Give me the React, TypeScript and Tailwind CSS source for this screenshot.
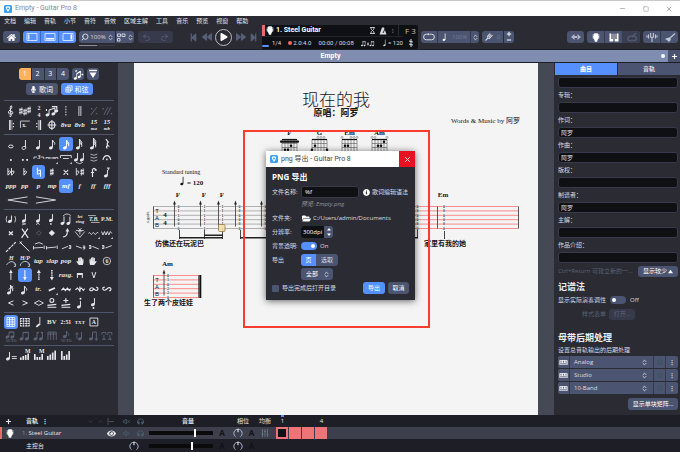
import { useState } from 'react';
import type { ReactNode } from 'react';
import {
  FaHome,
  FaPlay,
  FaBackward,
  FaForward,
  FaStepBackward,
  FaStepForward,
  FaMicrophone,
  FaFolderOpen,
  FaInfoCircle,
  FaEye,
  FaHeadphones,
  FaHandPaper,
  FaPowerOff,
} from 'react-icons/fa';
import {
  ChevronDown,
  ChevronUp,
  ChevronsUpDown,
  Hourglass,
  Minus,
  Plus,
  Redo2,
  Search,
  Square,
  Undo2,
  VolumeX,
  X,
} from 'lucide-react';

const MENUS = ['文档', '编辑', '音轨', '小节', '音符', '音效', '区域主解', '工具', '音乐', '预览', '视窗', '帮助'];

type Tool = {
  id: string;
  text?: string;
  active?: boolean;
  dim?: boolean;
  wide?: boolean;
};

/* One array per separated block of the palette, one inner array per row */
const PALETTE: Tool[][][] = [
  [
    [
      { id: 'clef' }, { id: 'sharps' }, { id: 'meter' }, { id: 'feel' },
      { id: 'freebar' }, { id: 'doublebar' }, { id: 'simile', dim: true }, { id: 'simile2', dim: true },
    ],
    [
      { id: 'repeatopen' }, { id: 'ending' }, { id: 'repeatclose' }, { id: 'coda' },
      { id: '8va', text: '8va' }, { id: '8vb', text: '8vb' }, { id: '15ma' }, { id: '15mb' },
    ],
  ],
  [
    [
      { id: 'whole' }, { id: 'half' }, { id: 'quarter' }, { id: 'eighth' },
      { id: 'sixteenth', active: true }, { id: 'thirtysecond' }, { id: 'sixtyfourth' }, { id: 'rest' },
    ],
    [
      { id: 'dot' }, { id: 'dots' }, { id: 'triplet' }, { id: 'tuplet' },
      { id: 'tupletbox' }, { id: 'tie' }, { id: 'ties' }, { id: 'fermata' },
    ],
    [
      { id: 'doubleflat' }, { id: 'flat' }, { id: 'natural', active: true }, { id: 'sharp' },
      { id: 'doublesharp' }, { id: 'flatsharp' }, { id: 'octaveup' }, { id: 'octavedown' },
    ],
    [
      { id: 'ppp', text: 'ppp' }, { id: 'pp', text: 'pp' }, { id: 'p', text: 'p' }, { id: 'mp', text: 'mp' },
      { id: 'mf', text: 'mf', active: true }, { id: 'f', text: 'f' }, { id: 'ff', text: 'ff' }, { id: 'fff', text: 'fff' },
    ],
    [{ id: 'crescendo', wide: true }, { id: 'decrescendo', wide: true }],
  ],
  [
    [
      { id: 'ghost' }, { id: 'accent' }, { id: 'heavyaccent' }, { id: 'staccato' },
      { id: 'legato' }, { id: 'letring' }, { id: 'trembar' }, { id: 'pm' },
    ],
    [
      { id: 'dead' }, { id: 'bigdead' }, { id: 'harmonic', dim: true }, { id: 'artificial' },
      { id: 'bend' }, { id: 'whammy' }, { id: 'vibrato' }, { id: 'widevibrato' },
    ],
    [
      { id: 'slideup' }, { id: 'slidedown' }, { id: 'slidelegato' }, { id: 'slideshift' },
      { id: 'slideinbelow' }, { id: 'slideinabove' }, { id: 'slideoutup' }, { id: 'slideoutdown' },
    ],
    [
      { id: 'hammer' }, { id: 'pulloff' }, { id: 'tap', text: 'tap' }, { id: 'slap', text: 'slap' },
      { id: 'pop', text: 'pop' }, { id: 'lefthand' }, { id: 'righthand' }, { id: 'stringnumber' },
    ],
    [
      { id: 'brushup' }, { id: 'brushdown', active: true }, { id: 'arpeggioup' }, { id: 'arpeggiodown' },
      { id: 'rasg', text: 'rasg.' }, { id: 'downbow' }, { id: 'upbow' },
    ],
    [
      { id: 'gracebefore' }, { id: 'graceon' }, { id: 'trill', text: 'tr.' }, { id: 'tremolo' },
      { id: 'mordent' }, { id: 'mordent2' }, { id: 'turn' }, { id: 'turn2' },
    ],
    [
      { id: 'fadein' }, { id: 'fadeout' }, { id: 'swell' }, { id: 'wahopen' },
      { id: 'wahclose' }, { id: 'golpe' }, { id: 'golpe2' },
    ],
  ],
  [
    [
      { id: 'chordgrid', active: true }, { id: 'scalegrid' }, { id: 'slash' },
      { id: 'bv' }, { id: 'timer' }, { id: 'txt' }, { id: 'section' },
    ],
    [
      { id: 'beamauto', dim: true }, { id: 'beam', dim: true }, { id: 'beamsplit', dim: true }, { id: 'beambars', dim: true },
      { id: 'stemauto', dim: true }, { id: 'stemup', dim: true }, { id: 'stemdown', dim: true }, { id: 'brackets', dim: true },
    ],
  ],
  [
    [{ id: 'tempo' }, { id: 'volumem' }, { id: 'panm' }, { id: 'volume' }, { id: 'pan' }],
  ],
];

const line = { fill: 'none', stroke: 'currentColor' };

function Head({ x = 5, y = 10, hollow }: { x?: number; y?: number; hollow?: boolean }) {
  return (
    <ellipse
      cx={x}
      cy={y}
      rx="2"
      ry="1.5"
      transform={`rotate(-20 ${x} ${y})`}
      fill={hollow ? 'none' : 'currentColor'}
      stroke={hollow ? 'currentColor' : 'none'}
      strokeWidth=".8"
    />
  );
}

function Note({ x = 6, y = 10, top = 3, flags = 0, hollow }: { x?: number; y?: number; top?: number; flags?: number; hollow?: boolean }) {
  return (
    <>
      <Head x={x} y={y} hollow={hollow} />
      <path d={`M${x + 1.6} ${y - 0.4}V${top}`} {...line} strokeWidth="1" />
      {Array.from({ length: flags }, (_, i) => (
        <path key={i} d={`M${x + 1.7} ${top + i * 1.6}q.3 1.5 1.7 2.2q1 1 .3 2.4`} {...line} strokeWidth="1" />
      ))}
    </>
  );
}

function Mark({ children, x = 7, y = 9, size = 6, italic }: { children: string; x?: number; y?: number; size?: number; italic?: boolean }) {
  return (
    <text
      x={x}
      y={y}
      fontSize={size}
      textAnchor="middle"
      fill="currentColor"
      className={italic ? 'font-bold italic' : 'font-bold'}
      fontFamily="Liberation Serif, serif"
    >
      {children}
    </text>
  );
}

function Bars({ heights }: { heights: number[] }) {
  return (
    <>
      {heights.map((h, i) => (
        <rect key={i} x={2 + i * 2.5} y={12 - h} width="1.7" height={h} fill="currentColor" />
      ))}
    </>
  );
}

const FLAT = 'M0 -4V3.2Q3.2 1 2.6 -.6Q1.6 -1.8 0 0';
const SHARP = 'M-.9 -3V3.6M.9 -3.6V3M-2 -1L2 -1.8M-2 1.8L2 1';

const ICONS: Record<string, ReactNode> = {
  clef: (
    <path d="M7.2 12.5q-1.6.4-1.7-.8M7.3 12.3L6.4 3.4Q6.6 1.4 7.8 1.8Q8.6 3.8 6.6 5.4Q4 7.4 4.6 9.2Q6 11 8.4 10Q9.6 8.2 8 7.2Q6.2 7 6.2 8.6" {...line} />
  ),
  sharps: (
    <g {...line} strokeWidth=".9">
      <path d={SHARP} transform="translate(3 7)" />
      <path d={SHARP} transform="translate(7.2 8)" />
      <path d={SHARP} transform="translate(11.3 6)" />
    </g>
  ),
  meter: (
    <>
      <Mark y={6} size={6}>2</Mark>
      <Mark y={13} size={6}>4</Mark>
    </>
  ),
  feel: (
    <>
      <Note x={2.5} y={11} top={6} />
      <Note x={8.5} y={10} top={4} />
      <path d="M4.2 6L10.2 4M7 2.5h5v3M1.5 7v-2" {...line} strokeWidth="1.2" />
      <Head x={11.5} y={7} />
    </>
  ),
  freebar: <path d="M7 2V12" {...line} strokeDasharray="1.5 1.2" />,
  doublebar: <path d="M6 2V12M8 2V12" {...line} strokeWidth=".9" />,
  simile: (
    <>
      <path d="M4 11L10 3" {...line} />
      <path d="M4 4h1.4v1.4H4zM9 9h1.4v1.4H9z" fill="currentColor" />
    </>
  ),
  simile2: (
    <>
      <path d="M4 11L8 3M7 11L11 3" {...line} />
      <path d="M2.5 4h1.4v1.4H2.5zM11 9h1.4v1.4H11z" fill="currentColor" />
    </>
  ),
  repeatopen: (
    <>
      <path d="M6 2V12" {...line} strokeWidth="1.6" />
      <path d="M8 2V12" {...line} strokeWidth=".6" />
      <path d="M9 5h1.2v1.2H9zM9 8h1.2v1.2H9z" fill="currentColor" />
    </>
  ),
  ending: (
    <>
      <path d="M2.5 10V3H12" {...line} strokeWidth=".8" />
      <Mark x={6.5} y={9} size={6}>x.</Mark>
    </>
  ),
  repeatclose: (
    <>
      <path d="M8.5 2V12" {...line} strokeWidth="1.6" />
      <path d="M6.5 2V12" {...line} strokeWidth=".6" />
      <path d="M4.2 5h1.2v1.2H4.2zM4.2 8h1.2v1.2H4.2z" fill="currentColor" />
    </>
  ),
  coda: <path d="M7 2V12M2.5 7H11.5M4 7a3 3.5 0 1 0 6 0a3 3.5 0 1 0-6 0" {...line} strokeWidth="1.1" />,
  '15ma': (
    <>
      <Mark y={6} size={7} italic>15</Mark>
      <Mark y={12.4} size={5} italic>ma</Mark>
    </>
  ),
  '15mb': (
    <>
      <Mark y={6} size={7} italic>15</Mark>
      <Mark y={12.4} size={5} italic>mb</Mark>
    </>
  ),
  whole: <ellipse cx="7" cy="9.5" rx="2.3" ry="1.5" {...line} />,
  half: <Note hollow y={11} />,
  quarter: <Note y={11} />,
  eighth: <Note flags={1} y={11} />,
  sixteenth: <Note flags={2} y={11} />,
  thirtysecond: <Note flags={3} x={5} y={11} top={2} />,
  sixtyfourth: <Note flags={4} x={5} y={11} top={1} />,
  rest: <path d="M6 2L8.4 5Q6.2 6.8 8.4 9Q5.4 8.6 7.4 11.6" {...line} strokeWidth="1.3" />,
  dot: <circle cx="7" cy="9" r="1" fill="currentColor" />,
  dots: <path d="M4 8h1.8v1.8H4zM8.4 8h1.8v1.8H8.4z" fill="currentColor" />,
  triplet: (
    <>
      <path d="M2 8V6H5M9 6H12V8" {...line} strokeWidth=".8" />
      <Mark y={8} size={6} italic>3</Mark>
    </>
  ),
  tuplet: (
    <>
      <path d="M1 8V6.500H3M11 6.500H13V8" {...line} strokeWidth=".8" />
      <Mark y={8} size={5} italic>n:m</Mark>
      <path d="M13 11v2h-2z" fill="currentColor" />
    </>
  ),
  tupletbox: (
    <>
      <path d="M1.5 7V4.5H12.5V7M4 7.5H10" {...line} strokeWidth=".9" />
      <path d="M13 11v2h-2z" fill="currentColor" />
    </>
  ),
  tie: (
    <>
      <Note x={3} y={9} top={2} />
      <Note x={9} y={9} top={2} />
      <path d="M3 11.5Q7 14 10 11.5" {...line} strokeWidth=".8" />
    </>
  ),
  ties: <path d="M3.5 3Q7 5.5 10.5 3M3.5 6Q7 8.5 10.5 6M3.5 9Q7 11.5 10.5 9" {...line} strokeWidth=".7" />,
  fermata: (
    <>
      <path d="M3 9Q4 4.5 7 4.5T11 9" {...line} strokeWidth="1.2" />
      <circle cx="7" cy="8.4" r=".9" fill="currentColor" />
    </>
  ),
  doubleflat: (
    <g {...line}>
      <path d={FLAT} transform="translate(4 7)" />
      <path d={FLAT} transform="translate(7.6 7)" />
    </g>
  ),
  flat: <path d={FLAT} transform="translate(6 7)" {...line} />,
  natural: <path d="M5.5 2.5V9.2L8.6 8.4M8.6 11.8V5L5.5 5.8" {...line} />,
  sharp: <path d={SHARP} transform="translate(7 7)" {...line} />,
  doublesharp: <path d="M5 5.4L9 9.2M9 5.4L5 9.2M4.6 5.2h1.2M8.2 5.2h1.2M4.6 9.4h1.2M8.2 9.4h1.2" {...line} strokeWidth="1.1" />,
  flatsharp: (
    <g {...line} strokeWidth=".9">
      <path d={FLAT} transform="translate(3.4 7)" />
      <path d={SHARP} transform="translate(9.4 7)" />
    </g>
  ),
  octaveup: <path d="M5.6 12V4.5M5.6 4.5Q7 2 9 4.6M7.6 5h2.4M4 7.5h3.2" {...line} strokeWidth="1.2" />,
  octavedown: (
    <>
      <Note x={6} y={11} top={5} />
      <path d="M7 3h3M8.5 3v2.2" {...line} />
    </>
  ),
  crescendo: <path d="M24 3.8L4 7L24 10.2" {...line} strokeWidth=".9" />,
  decrescendo: <path d="M4 3.8L24 7L4 10.2" {...line} strokeWidth=".9" />,
  ghost: (
    <>
      <Note x={6} y={9.5} top={3.5} />
      <path d="M3 4Q1.2 7 3 10.5M11 4Q12.8 7 11 10.5" {...line} strokeWidth=".8" />
    </>
  ),
  accent: (
    <>
      <Note y={9} top={2} />
      <path d="M4 11l4 1l-4 1" {...line} strokeWidth=".7" />
    </>
  ),
  heavyaccent: (
    <>
      <Note y={9} top={2} />
      <path d="M4.4 13l1.6-2.4l1.6 2.4" {...line} strokeWidth=".8" />
    </>
  ),
  staccato: (
    <>
      <Note y={8.5} top={2} />
      <circle cx="6" cy="12" r=".9" fill="currentColor" />
    </>
  ),
  legato: (
    <>
      <Note x={3.5} y={11.5} top={4.5} />
      <Note x={9.5} y={11.5} top={4.5} />
      <path d="M4 4Q8 0 12 3.5" {...line} strokeWidth=".8" />
    </>
  ),
  letring: (
    <>
      <Mark y={5.5} size={5} italic>let</Mark>
      <Mark y={11.5} size={5} italic>ring</Mark>
    </>
  ),
  trembar: (
    <>
      <Mark y={9} size={6} italic>T.B.</Mark>
      <path d="M1 3.5H9M4 10.5H13" {...line} strokeWidth=".7" />
    </>
  ),
  pm: <Mark y={9} size={6}>P.M.</Mark>,
  dead: <path d="M5 5.4L9 9M9 5.4L5 9" {...line} strokeWidth="1.4" />,
  bigdead: <path d="M4 2.5L10.4 12M10 2.5L3.6 12" {...line} strokeWidth="1.2" />,
  harmonic: <path d="M4.5 7L7 4.8L9.5 7L7 9.2z" {...line} strokeWidth=".8" />,
  artificial: <path d="M3.8 7L7 4L10.2 7L7 10z" fill="currentColor" />,
  bend: (
    <>
      <path d="M4 11Q8.6 11 8.6 5" {...line} strokeWidth="1.1" />
      <path d="M8.6 2l2 3.4h-4z" fill="currentColor" />
    </>
  ),
  whammy: <path d="M2 5.5L7 11.5L12 5.5M3 4.5H11M7 8.5V4M5.4 2l3.2 4M8.6 2L5.4 6" {...line} strokeWidth=".8" />,
  vibrato: (
    <>
      <path d="M1.500 7.500q1-2 2 0t2 0t2 0t2 0t2-.5" {...line} strokeWidth="1" />
      <path d="M13 11v2h-2z" fill="currentColor" />
    </>
  ),
  widevibrato: (
    <>
      <path d="M1.5 5.5l1.5 3.5l1.5-3.5l1.5 3.5l1.5-3.5l1.5 3.5l1.5-3.5l1.5 2" {...line} strokeWidth=".9" />
      <path d="M13 11v2h-2z" fill="currentColor" />
    </>
  ),
  slideup: <path d="M2 12L12 2" {...line} strokeDasharray="3 .8" strokeWidth="1.2" />,
  slidedown: <path d="M2.5 2.5L11.5 11.5M1.8 1.4l2 2.2M3.8 1.4l-2 2.2" {...line} strokeWidth="1" />,
  slidelegato: <path d="M1.5 6v3.5M1.5 8L11.5 7.4M12.4 5.5v3.5M3 4Q7 1 11 4" {...line} strokeWidth=".9" />,
  slideshift: <path d="M1.5 6v3.5M1.5 8L11.5 7M12.4 5.5v3.5" {...line} strokeWidth=".9" />,
  slideinbelow: <path d="M3 8.8L9 6.4M10 5.5h2v3h-2M10 7h2" {...line} strokeWidth=".9" />,
  slideinabove: <path d="M3 6L9 8.2M10 6h2v3h-2M10 7.5h2" {...line} strokeWidth=".9" />,
  slideoutup: <path d="M2 5.5h2v3H2M2 7h2M5.5 6.4L12 9" {...line} strokeWidth=".9" />,
  slideoutdown: <path d="M2 5.5h2v3H2M2 7h2M5.5 8L12 5.6" {...line} strokeWidth=".9" />,
  hammer: (
    <>
      <Mark x={7.5} y={6} size={6} italic>H</Mark>
      <path d="M2.5 11Q7 5 11.5 9.5M10 10h1.8v2.5H10" {...line} strokeWidth=".8" />
    </>
  ),
  pulloff: (
    <>
      <Mark y={6} size={6} italic>H/P</Mark>
      <path d="M2.5 12V10Q7 5 11.5 9.5M10 10h1.8v2.5H10" {...line} strokeWidth=".8" />
    </>
  ),
  stringnumber: (
    <>
      <circle cx="7" cy="7" r="3.8" {...line} strokeWidth=".8" />
      <Mark y={9} size={6}>6</Mark>
    </>
  ),
  brushup: (
    <>
      <path d="M7 12V4" {...line} />
      <path d="M7 1.5l1.8 3.5H5.2z" fill="currentColor" />
    </>
  ),
  brushdown: (
    <>
      <path d="M7 2V10" {...line} />
      <path d="M7 12.5l1.8-3.5H5.2z" fill="currentColor" />
    </>
  ),
  arpeggioup: (
    <>
      <path d="M7 12V4" {...line} strokeWidth="1.6" strokeDasharray="1.4 .8" />
      <path d="M7 1.5l2 3.5H5z" fill="currentColor" />
    </>
  ),
  arpeggiodown: (
    <>
      <path d="M7 2V10" {...line} strokeWidth="1.6" strokeDasharray="1.4 .8" />
      <path d="M7 12.5l2-3.5H5z" fill="currentColor" />
    </>
  ),
  downbow: <path d="M4.5 10V5.5H9.5V10M4.5 5.5h5v1h-5z" {...line} />,
  upbow: <path d="M5 4L7 10L9 4" {...line} />,
  gracebefore: (
    <>
      <Note x={5} y={11} top={3} flags={2} />
      <path d="M4.5 7.5L9.5 4" {...line} strokeWidth=".8" />
    </>
  ),
  graceon: <Note x={5} y={11} top={4} flags={1} />,
  tremolo: (
    <>
      <path d="M3.8 8.6L10.2 6" {...line} strokeWidth="1.8" />
      <path d="M13 11v2h-2z" fill="currentColor" />
    </>
  ),
  mordent: <path d="M2.5 8.5l2-2.4l2 2.4l2-2.4l2 2.4l1.4-1.8" {...line} strokeWidth="1.2" />,
  mordent2: <path d="M2.5 8l2-2l2 2.4l2-2.4l2 2.4l1.4-1.8M7 4.4V10" {...line} strokeWidth="1.1" />,
  turn: <path d="M5 8.8Q2.6 9 2.8 7Q4.5 4.4 7 7T11 7.6Q11.4 5 9.2 5.2M5 8.8Q6.4 7.6 7 7" {...line} strokeWidth="1.2" />,
  turn2: <path d="M5 5.2Q2.6 5 2.8 7Q4.5 9.6 7 7T11 6.4Q11.4 9 9.2 8.8" {...line} strokeWidth="1.2" />,
  fadein: <path d="M9.6 4.8L4.6 7L9.6 9.2" {...line} />,
  fadeout: <path d="M4.6 4.8L9.6 7L4.6 9.2" {...line} />,
  swell: <path d="M7 4.6L2.4 7L7 9.4M7 4.6L11.6 7L7 9.4" {...line} strokeWidth=".9" />,
  wahopen: <path d="M5 4.4a2 2 0 1 0 4 0a2 2 0 1 0-4 0M2.5 9.4L11.5 8.4M2.5 11.4H11.5" {...line} strokeWidth="1.1" />,
  wahclose: <path d="M7 2v5M4.5 4.5h5M2.5 9.4L11.5 8.4M2.5 11.4H11.5" {...line} strokeWidth="1.1" />,
  golpe: (
    <>
      <Note x={6} y={11} top={5} />
      <circle cx="7.6" cy="2.6" r="1" fill="currentColor" />
    </>
  ),
  golpe2: (
    <>
      <Note x={6} y={8.6} top={2} />
      <circle cx="6.6" cy="12" r="1" fill="currentColor" />
    </>
  ),
  chordgrid: <path d="M3 2.5h8v9H3zM3 4.6h8M3 7h8M3 9.4h8M5.6 2.5v9M8.4 2.5v9" {...line} strokeWidth=".8" />,
  scalegrid: <path d="M2.5 3v8.5M5.5 3v8.5M8.5 3v8.5M11.5 3v8.5M2.5 3.5h9M2.5 6h9M2.5 8.5h9M2.5 11h9" {...line} strokeWidth="1" strokeDasharray="1.8 .5" />,
  slash: (
    <>
      <path d="M8 2V10" {...line} strokeWidth=".9" />
      <path d="M4.4 12L7.8 9" {...line} strokeWidth="1.8" />
    </>
  ),
  bv: <Mark y={9.4} size={7}>BV</Mark>,
  timer: <Mark y={9.4} size={6}>2:51</Mark>,
  txt: <Mark y={9} size={5}>TXT</Mark>,
  section: (
    <>
      <path d="M3 3h8v8H3z" {...line} strokeWidth=".9" />
      <Mark y={9.4} size={6}>A</Mark>
    </>
  ),
  beamauto: (
    <>
      <Note x={3.5} y={8} top={3} />
      <Note x={8.5} y={8} top={3} />
      <path d="M5.2 3h5" {...line} strokeWidth="1.4" />
      <Mark y={13} size={4}>AUTO</Mark>
    </>
  ),
  beam: (
    <>
      <Note x={3.5} y={10} top={3} />
      <Note x={9} y={10} top={3} />
      <path d="M5.2 3.4h5.5" {...line} strokeWidth="1.4" />
    </>
  ),
  beamsplit: (
    <>
      <Note x={3.5} y={10} top={3} />
      <Note x={9} y={10} top={3} />
      <path d="M5.2 3.4h1.8M9 3.4h1.8" {...line} strokeWidth="1.4" />
    </>
  ),
  beambars: <path d="M3 11V3H11.5V11M5.8 11V3M8.6 11V3M3 5h8.5" {...line} strokeWidth="1" />,
  stemauto: (
    <>
      <Note x={6} y={7.5} top={2} flags={1} />
      <Mark y={13} size={4}>AUTO</Mark>
    </>
  ),
  stemup: (
    <>
      <Note x={7} y={10} top={3} />
      <path d="M4 10V4M2.6 5.6L4 3.4L5.4 5.6" {...line} strokeWidth=".9" />
    </>
  ),
  stemdown: (
    <>
      <Note x={4} y={10} top={3} />
      <path d="M5.8 3H9.5V11M8 9.4L9.5 11.6L11 9.4" {...line} strokeWidth="1" />
    </>
  ),
  brackets: <path d="M2 6V3.4H6V6M8 6V3.4H12V6M2.5 10.5L4 8.5L5.5 10.5zM8.5 10.5L10 8.5L11.5 10.5zM4 8.5V6M10 8.5V6" {...line} strokeWidth=".9" />,
  tempo: (
    <>
      <Note x={4} y={11} top={4} />
      <path d="M8 8.6h5M8 10.6h5" {...line} strokeWidth=".9" />
    </>
  ),
  volumem: (
    <>
      <Bars heights={[2.5, 4, 5, 6.5]} />
      <Mark x={10} y={5} size={6}>M</Mark>
    </>
  ),
  panm: (
    <>
      <Bars heights={[6, 3, 3, 6]} />
      <Mark x={10} y={5} size={6}>M</Mark>
    </>
  ),
  volume: <Bars heights={[4, 5.5, 7.5, 9.5]} />,
  pan: <Bars heights={[9, 4, 5.5, 9]} />,
};

function ToolButton({ tool }: { tool: Tool }) {
  const tone = tool.active ? 'bg-[#5690ff] text-white' : tool.dim ? 'text-[#5c6375]' : 'text-[#e6e7ea]';
  const hand = tool.id === 'lefthand' || tool.id === 'righthand';
  return (
    <button
      aria-label={tool.id}
      className={`flex h-[14px] items-center justify-center rounded-[3px] ${tone} ${tool.wide ? 'col-span-2' : ''}`}
    >
      {tool.text && (
        <span className="font-['Liberation_Serif',serif] text-[7px] leading-none font-bold italic">{tool.text}</span>
      )}
      {hand && <FaHandPaper className={`size-2 ${tool.id === 'righthand' ? '-scale-x-100' : ''}`} />}
      {!tool.text && !hand && (
        <svg viewBox={tool.wide ? '0 0 28 14' : '0 0 14 14'} className={tool.wide ? 'h-[14px] w-7' : 'size-[14px]'}>
          {ICONS[tool.id]}
        </svg>
      )}
    </button>
  );
}

function Logo() {
  return (
    <svg viewBox="0 0 16 16" className="size-2 shrink-0">
      <rect width="16" height="16" rx="3" fill="#3aa0ef" />
      <path d="M3.5 3.5Q8 1.5 12.5 3.5Q13 9 8 14Q3 9 3.5 3.5z" fill="#fff" />
      <circle cx="8" cy="7" r="2" fill="#3aa0ef" />
    </svg>
  );
}

function Headstock({ className }: { className: string }) {
  return (
    <svg viewBox="0 0 14 16" className={className}>
      <path d="M3.5 1Q7 0 10.500 1L11.500 10Q9.500 11 9 15.500H5Q4.500 11 2.500 10z" fill="currentColor" />
      <path d="M1 3.5h12M1 6h12M1 8.5h12" stroke="currentColor" strokeWidth="1.6" />
    </svg>
  );
}

function PanelIcon({ side }: { side: 'left' | 'bottom' | 'right' }) {
  return (
    <svg viewBox="0 0 12 8" className="h-2 w-3">
      <path d="M1 .5h10v7H1z" fill="none" stroke="#dce8ff" strokeWidth=".9" />
      {side === 'left' && <path d="M2 1.5h1.500v5H2z" fill="#dce8ff" />}
      {side === 'bottom' && <path d="M2 5h8v1.500H2z" fill="#fff" />}
      {side === 'right' && <path d="M8.500 1.500h1.500v5H8.500z" fill="#fff" />}
    </svg>
  );
}

function Toolbar() {
  return (
    <div className="relative flex h-6 items-center text-[6px] text-[#d9dbe2]">
      <button aria-label="主页" className="ml-[3px] flex h-3 w-[17px] items-center justify-center rounded-[3px] bg-[#4b5470] text-white">
        <FaHome className="size-[9px]" />
      </button>
      <div className="ml-[3px] flex h-3 w-[53px] divide-x divide-[#3c68bd] overflow-hidden rounded-[3px] bg-[#5690ff]">
        {(['left', 'bottom', 'right'] as const).map(side => (
          <button key={side} aria-label={side} className="flex flex-1 items-center justify-center">
            <PanelIcon side={side} />
          </button>
        ))}
      </div>
      <div className="ml-[3px] flex h-3 w-[55px] items-center divide-x divide-[#2a2b33] rounded-[3px] bg-[#4b5470]">
        <button aria-label="缩放" className="flex h-3 w-[37px] items-center justify-between pr-px pl-[2px]">
          <Search className="size-2 -scale-x-100" strokeWidth={3} />
          <span>100%</span>
          <ChevronsUpDown className="size-[7px]" strokeWidth={3} />
        </button>
        <button aria-label="排版" className="flex h-3 flex-1 items-center justify-around">
          <svg viewBox="0 0 9 9" className="size-[9px]">
            <path d="M.5 1h3v2.5h-3zM5 1h3v2.5H5zM.5 5.5h2.5V8H.5z" fill="none" stroke="currentColor" strokeWidth=".9" />
          </svg>
          <ChevronsUpDown className="size-[7px]" strokeWidth={3} />
        </button>
      </div>
      <div className="ml-1 flex h-3 w-[35px] rounded-[3px] bg-[#363a4b] text-[#596079]">
        <button aria-label="撤销" className="flex flex-1 items-center justify-center">
          <Undo2 className="size-[9px]" />
        </button>
        <button aria-label="重做" className="flex flex-1 items-center justify-center">
          <Redo2 className="size-[9px]" />
        </button>
      </div>
      <div className="absolute bottom-[3px] left-[79px] h-px w-9 bg-[#3a3c46]">
        <div className="h-px w-1/2 bg-[#8a8d98]" />
      </div>

      <div className="ml-4 flex w-[69px] items-center justify-between text-[#565e78]">
        <button aria-label="开头"><FaStepBackward className="size-[9px]" /></button>
        <button aria-label="后退"><FaBackward className="size-[10px]" /></button>
        <button aria-label="播放" className="flex size-[17px] items-center justify-center rounded-full border border-[#b9bbc4] text-white">
          <FaPlay className="ml-px size-2" />
        </button>
        <button aria-label="前进"><FaForward className="size-[10px]" /></button>
        <button aria-label="结尾"><FaStepForward className="size-[9px]" /></button>
      </div>

      <div className="ml-1 flex h-6 w-[156px] rounded-[2px] bg-[#0f1014]">
        <div className="flex w-[141px] flex-col">
          <div className="flex h-3 items-center border-b border-[#24252c]">
            <div className="h-[11px] w-[3px] bg-[#e96b6b]" />
            <Headstock className="ml-px h-[9px] w-2 text-white" />
            <span className="ml-[2px] flex-1 font-['Roboto','Open_Sans',sans-serif] text-[7px] font-bold text-white">1. Steel Guitar</span>
            <Hourglass className="size-[7px]" strokeWidth={3} />
            <svg viewBox="0 0 8 8" className="mx-[3px] size-2">
              <path d="M3 .5h2L7.500 7.500h-7z" fill="currentColor" />
              <path d="M4 6L6.500 1" fill="none" stroke="#0f1014" strokeWidth=".9" />
            </svg>
            <span className="w-[6px] text-center">⁝</span>
            <span className="ml-[2px] h-[11px] w-px bg-[#2a2b33]" />
            <span className="w-1" />
          </div>
          <div className="flex h-3 items-center justify-between pl-[10px] font-['Roboto','Open_Sans',sans-serif] whitespace-nowrap">
            <span>1/4</span>
            <span className="flex items-center gap-px">
              <span className="size-1 rounded-full bg-[#f06a6a]" />
              2.0:4.0
            </span>
            <span>00:00 / 00:08</span>
            <svg viewBox="0 0 28 14" className="h-[7px] w-[14px]" aria-label="三连音感">
              <Note x={2} y={11} top={3} />
              <Note x={7} y={11} top={3} />
              <Note x={19} y={11} top={3} />
              <Note x={24} y={11} top={3} />
              <path d="M3 3.500h6M20 3.500h6M12 6.500h4M12 9.500h4" stroke="currentColor" strokeWidth="1.800" />
            </svg>
            <span className="flex items-center">
              <svg viewBox="0 0 10 14" className="h-2 w-[6px]"><Note x={4} y={11} top={1} /></svg>
              = 120
            </span>
          </div>
        </div>
        <div className="flex flex-1 flex-col items-center justify-around">
          <span className="text-[8px] leading-none whitespace-nowrap text-[#c9bdb4]">F 3</span>
          <svg viewBox="0 0 6 8" className="h-2 w-[6px]">
            <path d="M3 0v8M1 2l4 1M1 5l4 1" stroke="currentColor" fill="none" />
          </svg>
        </div>
        <div className="absolute bottom-[2px] left-[262px] h-[2px] w-[7px] rounded-full bg-[#5690ff]" />
      </div>

      <div className="ml-[3px] flex h-3 w-[58px] items-center divide-x divide-[#363a49] rounded-[3px] bg-[#4b5470]">
        <button aria-label="循环" className="flex h-3 w-[17px] items-center justify-center">
          <svg viewBox="0 0 12 8" className="h-2 w-3">
            <path d="M5 1.2H3.4a2.8 2.8 0 0 0 0 5.6h5.2a2.8 2.8 0 0 0 0-5.6H7" fill="none" stroke="currentColor" />
            <path d="M5 0v2.6L7 1.3z" fill="currentColor" />
          </svg>
        </button>
        <button aria-label="速度" className="flex h-3 flex-1 items-center gap-1 pl-[2px]">
          <svg viewBox="0 0 10 14" className="h-[10px] w-2 text-white"><Note x={5} y={11} top={2} /></svg>
          <span className="text-[#777f98]">100%</span>
        </button>
        <button aria-label="调整速度" className="flex h-3 w-2 items-center justify-center">
          <ChevronsUpDown className="size-[7px]" strokeWidth={3} />
        </button>
      </div>
      <div className="ml-[3px] flex h-3 w-8 items-center divide-x divide-[#2a2b33] rounded-[3px] bg-[#4b5470]">
        <button aria-label="移调" className="flex h-3 w-[22px] items-center justify-center gap-1">
          <svg viewBox="0 0 8 8" className="size-2">
            <path d="M.5 7.5L3 5L2.600 3.500L5 .5M3 5L4.500 5.400L7.500 2M4 4L6 1.500" fill="none" stroke="currentColor" strokeWidth="1.1" />
          </svg>
          <span className="text-[#777f98]">0</span>
        </button>
        <button aria-label="增减" className="flex h-3 flex-1 flex-col items-center justify-center text-white">
          <Plus className="size-[6px]" strokeWidth={4} />
          <Minus className="size-[6px]" strokeWidth={4} />
        </button>
      </div>

      <div className="mr-[2px] ml-auto flex items-center gap-[3px]">
        <button aria-label="宽度" className="flex h-3 w-[17px] items-center justify-center rounded-[3px] bg-[#4b5470] text-[#aeb4c6]">
          <svg viewBox="0 0 12 8" className="h-2 w-3">
            <path d="M1 4L4.500 1v6zM11 4L7.500 1v6zM4 3h4v2H4z" fill="currentColor" />
          </svg>
        </button>
        <div className="flex h-3 w-[53px] items-center divide-x divide-[#363a49] overflow-hidden rounded-[3px] bg-[#4b5470]">
          <button aria-label="指板" className="flex h-3 flex-1 items-center justify-center text-white">
            <Headstock className="h-[9px] w-2" />
          </button>
          <button aria-label="键盘" className="flex h-3 flex-1 items-center justify-center">
            <svg viewBox="0 0 10 9" className="h-[9px] w-[10px]">
              <path d="M.5.5h9v8h-9z" fill="#fff" />
              <path d="M3 0v6M5 0v9M7 0v6" stroke="#3b425a" strokeWidth="1.2" />
            </svg>
          </button>
          <button aria-label="鼓" className="flex h-3 flex-1 items-center justify-center bg-[#3a3e50] text-[#596079]">
            <svg viewBox="0 0 10 9" className="h-[9px] w-[10px]">
              <path d="M1 4v3q4 2 8 0V4q-4-2-8 0M5 4l4-4" fill="none" stroke="currentColor" strokeWidth="1.2" />
            </svg>
          </button>
        </div>
        <div className="flex h-3 w-[35px] items-center divide-x divide-[#363a49] rounded-[3px] bg-[#4b5470] text-[#c3c7d4]">
          <button aria-label="调音器" className="flex h-3 flex-1 items-center justify-center">
            <svg viewBox="0 0 12 9" className="h-[9px] w-3">
              <path d="M4.6 0v4q1.4 1 2.8 0V0M6 4.6V9M2.5 1.5v4M9.5 1.5v4M1 2.5v2M11 2.5v2" fill="none" stroke="currentColor" strokeWidth="1.1" />
            </svg>
          </button>
          <button aria-label="拾音" className="flex h-3 flex-1 items-center justify-center">
            <svg viewBox="0 0 12 9" className="h-[9px] w-3">
              <path d="M11 .5L6 5" stroke="currentColor" strokeWidth="1.2" />
              <path d="M1 6q3-2 5-1.5q2 2-1 4.5q-1-1.5-4-3z" fill="currentColor" />
            </svg>
          </button>
        </div>
      </div>
    </div>
  );
}

function Palette() {
  return (
    <aside className="w-[118px] shrink-0 bg-[#2a2b33] px-1 pt-[5px]">
      <div className="flex justify-center gap-[3px]">
        <div className="flex h-3 w-[50px] divide-x divide-[#2a2b33] overflow-hidden rounded-[3px] bg-[#4b5470] text-[7px] leading-3 text-white">
          {['1', '2', '3', '4'].map(n => (
            <button key={n} className={`flex-1 ${n === '1' ? 'bg-[#ffb259]' : ''}`}>{n}</button>
          ))}
        </div>
        <button aria-label="多声部" className="flex h-3 w-3 items-center justify-center rounded-[3px] bg-[#4b5470] text-white">
          <svg viewBox="0 0 14 14" className="size-[11px]">
            <Note x={3} y={12} top={6} />
            <Note x={8} y={10} top={3} />
            <path d="M4.7 6l5-3M3 3l2-1M11 7h2" stroke="currentColor" strokeWidth="1.6" />
          </svg>
        </button>
        <button aria-label="筛选" className="flex h-3 w-3 items-center justify-center rounded-[3px] bg-[#4b5470] text-white">
          <svg viewBox="0 0 10 10" className="size-[10px]">
            <path d="M1 1.5h8" stroke="currentColor" strokeWidth="1.4" />
            <path d="M1.5 3.5h7L5 9z" fill="currentColor" />
          </svg>
        </button>
      </div>
      <div className="mt-[3px] mb-[5px] flex justify-center gap-[3px] text-[7px] text-white">
        <button className="flex h-3 w-8 items-center justify-center gap-[2px] rounded-[3px] bg-[#4b5470]">
          <FaMicrophone className="size-[7px]" />
          歌词
        </button>
        <button className="flex h-3 w-8 items-center justify-center gap-[2px] rounded-[3px] bg-[#5690ff]">
          <svg viewBox="0 0 9 9" className="size-2">
            <path d="M1 3h5v5H1zM3 3V1h5v5H6M1 5.5h5M3.5 3v5" fill="none" stroke="currentColor" strokeWidth=".9" />
          </svg>
          和弦
        </button>
      </div>
      {PALETTE.map((block, i) => (
        <div key={i} className={`border-t border-[#4e566c] ${i === 0 ? 'pt-[3px] pb-[2px]' : 'py-[2px]'}`}>
          {block.map((row, j) => (
            <div key={j} className="grid grid-cols-8">
              {row.map(tool => <ToolButton key={tool.id} tool={tool} />)}
            </div>
          ))}
        </div>
      ))}
    </aside>
  );
}

const STRINGS = [0, 1, 2, 3, 4, 5];

function ScoreText({ x, y, size = 7, anchor = 'middle', bold = true, children }: { x: number; y: number; size?: number; anchor?: 'start' | 'middle'; bold?: boolean; children: ReactNode }) {
  return (
    <text x={x} y={y} fontSize={size} textAnchor={anchor} fontWeight={bold ? 700 : 400} fill="#15161a">
      {children}
    </text>
  );
}

function Staff({ x1, x2, y, color }: { x1: number; x2: number; y: number; color: string }) {
  return <>{STRINGS.map(s => <path key={s} d={`M${x1} ${y + s * 4.4}H${x2}`} stroke={color} strokeWidth=".9" />)}</>;
}

function Beat({ x, y, frets, stroke = true }: { x: number; y: number; frets: string; stroke?: boolean }) {
  return (
    <>
      {stroke && (
        <>
          <path d={`M${x - 4} ${y + 20}V${y - 3}`} stroke="#333" strokeWidth=".8" />
          <path d={`M${x - 4} ${y - 6}l1.4 4h-2.8z`} fill="#222" />
        </>
      )}
      {frets.split('').map((f, s) => (
        <g key={s}>
          <rect x={x - 1.3} y={y + s * 4.4 - 1.6} width="2.6" height="3.2" fill="#f4f4f4" />
          <text x={x} y={y + s * 4.4 + 1.3} fontSize="4" textAnchor="middle" fontWeight="700" fill="#33424a">{f}</text>
        </g>
      ))}
    </>
  );
}

function TabSign({ y }: { y: number }) {
  return (
    <g fontFamily="Liberation Sans, sans-serif">
      <ScoreText x={157} y={y + 6} size={6} bold={false}>T</ScoreText>
      <ScoreText x={157} y={y + 13} size={6} bold={false}>A</ScoreText>
      <ScoreText x={157} y={y + 20} size={6} bold={false}>B</ScoreText>
    </g>
  );
}

const CHORDS = [
  { name: 'F', x: 282, barre: true, open: [] as number[], dots: [[1, 3], [2, 3], [3, 2]] },
  { name: 'G', x: 312, barre: false, open: [2, 3, 4], dots: [[0, 3], [1, 2], [5, 3]] },
  { name: 'Em', x: 342, barre: false, open: [0, 3, 4, 5], dots: [[1, 2], [2, 2]] },
  { name: 'Am', x: 372, barre: false, open: [0, 1, 5], dots: [[2, 2], [3, 2], [4, 1]] },
];

function Score() {
  return (
    <svg viewBox="134 128 404 186" className="block h-[186px] w-[404px]" fontFamily="Liberation Serif, Noto Sans CJK SC, serif">
      {CHORDS.map(c => (
        <g key={c.name}>
          <ScoreText x={c.x + 7.5} y={134.5}>{c.name}</ScoreText>
          {STRINGS.map(s => <path key={s} d={`M${c.x + s * 3} 139.5V155`} stroke="#555" strokeWidth=".6" />)}
          {[143.5, 147.5, 151.5].map(y => <path key={y} d={`M${c.x} ${y}h15`} stroke="#555" strokeWidth=".6" />)}
          <path d={`M${c.x} 139.5h15`} stroke="#111" strokeWidth="1.2" />
          {c.barre && <path d={`M${c.x - 1} 141.7h17`} stroke="#111" strokeWidth="2.2" strokeLinecap="round" />}
          {c.open.map(s => <circle key={s} cx={c.x + s * 3} cy="137.4" r="1" fill="none" stroke="#666" strokeWidth=".5" />)}
          {c.dots.map(([s, f]) => <circle key={s} cx={c.x + s * 3} cy={137.8 + f * 4} r="1.3" fill="#111" />)}
        </g>
      ))}

      <ScoreText x={162} y={174} size={6} anchor="start" bold={false}>Standard tuning</ScoreText>
      <g transform="translate(177 176) scale(.8)" color="#15161a"><Note x={6} y={10} top={1} /></g>
      <ScoreText x={187} y={185} anchor="start">= 120</ScoreText>
      <ScoreText x={178} y={197}>F</ScoreText>
      <ScoreText x={204} y={197}>F</ScoreText>
      <ScoreText x={222} y={197}>F</ScoreText>
      <ScoreText x={443} y={197}>Em</ScoreText>
      <text transform="translate(149 217) rotate(-90)" fontSize="5" textAnchor="middle" fill="#15161a">s.guit.</text>

      <Staff x1={153} x2={418} y={206.5} color="#a8a8a8" />
      <Staff x1={415} x2={518} y={206.5} color="#fa7f7f" />
      <path d="M153.5 206.5v22M437.5 206.5v22M518.5 206.5v22" stroke="#444" strokeWidth=".9" />
      <TabSign y={207} />
      <ScoreText x={165} y={216.5} size={7}>4</ScoreText>
      <ScoreText x={165} y={224.5} size={7}>4</ScoreText>
      <Beat x={178.5} y={206.5} frets="011000" />
      <Beat x={204.5} y={206.5} frets="111111" />
      <Beat x={222.5} y={206.5} frets="111111" />
      <Beat x={239.5} y={206.5} frets="000000" />
      <Beat x={265.5} y={206.5} frets="000000" />
      <Beat x={417.5} y={206.5} frets="000000" stroke={false} />
      <Beat x={444} y={206.5} frets="000000" stroke={false} />
      <path d="M179.5 230v9M204.5 230v9M222.5 230v9M240.5 230v9M417.5 230v8M444.5 231v8" stroke="#333" strokeWidth=".9" />
      <path d="M179 237.8h44M240 237.8h178M204 235.3h19" stroke="#222" strokeWidth="1.6" />
      <rect x="218.5" y="224.5" width="6.5" height="7" rx="1" fill="#f3dfa6" fillOpacity=".85" stroke="#8f7a4c" strokeWidth=".8" />
      <ScoreText x={155} y={246} anchor="start">仿佛还在玩泥巴</ScoreText>
      <ScoreText x={424} y={246} anchor="start">家里有我的她</ScoreText>

      <ScoreText x={167.5} y={266}>Am</ScoreText>
      <Staff x1={153} x2={201} y={275.5} color="#fa7f7f" />
      <path d="M153.5 275.5v22M198.5 275.5v22" stroke="#444" strokeWidth=".8" />
      <path d="M200.3 275v23" stroke="#111" strokeWidth="2" />
      <TabSign y={276} />
      <Beat x={168} y={275.5} frets="010220" />
      <ScoreText x={144} y={305} anchor="start">生了两个皮娃娃</ScoreText>
    </svg>
  );
}

function ExportDialog() {
  const [transparent, setTransparent] = useState(true);
  const button = 'h-3 rounded-[3px] text-[6px] leading-3 text-white';
  return (
    <div
      role="dialog"
      aria-labelledby="dialog-title"
      className="absolute top-[88px] left-[132px] w-[149px] bg-[#2a2b33] text-[6px] text-[#dcdde2] shadow-[0_1px_7px_rgba(0,0,0,0.6)]"
    >
      <div className="flex h-4 items-center bg-white pl-1">
        <Logo />
        <span id="dialog-title" className="ml-[3px] flex-1 font-['Roboto','Noto_Sans_CJK_SC',sans-serif] text-[7px] text-[#444]">png 导出 - Guitar Pro 8</span>
        <button aria-label="关闭" className="flex h-4 w-4 items-center justify-center bg-[#e81123] text-white">
          <X className="size-[9px]" />
        </button>
      </div>
      <form className="flex flex-col gap-[2px] px-[6px] pt-1 pb-[6px]" onSubmit={e => e.preventDefault()}>
        <h2 className="mb-px text-[8px] leading-[12px] font-bold text-white">PNG 导出</h2>
        <div className="grid grid-cols-[26px_58px_1fr] items-center gap-x-[3px]">
          <label htmlFor="file-name">文件名称:</label>
          <input id="file-name" defaultValue="%f" className="h-3 w-full rounded-[3px] border border-[#363a49] bg-[#0f1014] px-[3px] text-white" />
          <a href="#syntax" className="flex items-center gap-[2px] pl-px whitespace-nowrap">
            <FaInfoCircle className="size-[7px] text-white" />
            歌词编辑语法
          </a>
          <span className="col-start-2 h-3 leading-3 text-[#9698a2] italic">预览: Empty.png</span>
        </div>
        <div className="flex h-3 items-center gap-[3px]">
          <span className="w-[26px]">文件夹:</span>
          <button type="button" className="flex items-center gap-[2px] pl-px">
            <FaFolderOpen className="size-[9px] text-white" />
            C:/Users/admin/Documents
          </button>
        </div>
        <div className="flex h-3 items-center gap-[3px]">
          <label htmlFor="dpi" className="w-[26px]">分辨率:</label>
          <div className="flex h-3 w-8 overflow-hidden rounded-[3px] bg-[#4b5470]">
            <input id="dpi" defaultValue="300dpi" className="w-[23px] bg-[#0f1014] pl-[2px] text-white" />
            <button type="button" aria-label="分辨率增减" className="flex flex-1 items-center justify-center text-white">
              <svg viewBox="0 0 6 10" className="h-[10px] w-[6px]">
                <path d="M3 1l2 2.6H1zM3 9l2-2.6H1z" fill="currentColor" />
              </svg>
            </button>
          </div>
        </div>
        <label className="flex h-3 items-center gap-[3px]">
          <span className="w-[26px]">背景透明:</span>
          <input type="checkbox" className="peer sr-only" checked={transparent} onChange={e => setTransparent(e.target.checked)} />
          <span className={`flex h-2 w-4 items-center rounded-full px-[2px] ${transparent ? 'justify-end bg-[#5690ff]' : 'bg-[#4b5470]'}`}>
            <span className="size-1 rounded-full bg-white" />
          </span>
          <span>{transparent ? 'On' : 'Off'}</span>
        </label>
        <div className="flex h-3 items-center gap-[3px]">
          <span className="w-[26px]">导出</span>
          <div className="flex overflow-hidden rounded-[3px]">
            <button type="button" className="h-3 w-[15px] bg-[#5690ff] text-white">页</button>
            <button type="button" className="h-3 w-[22px] bg-[#4b5470]">选取</button>
          </div>
        </div>
        <div className="relative ml-[29px] flex h-3 w-8 items-center">
          <select aria-label="范围" className="h-3 w-full appearance-none rounded-[3px] bg-[#4b5470] pl-[5px] text-white">
            <option>全部</option>
          </select>
          <ChevronsUpDown className="pointer-events-none absolute right-[3px] size-[7px]" strokeWidth={3} />
        </div>
        <div className="flex h-3 items-center">
          <label className="flex flex-1 items-center gap-[3px]">
            <input type="checkbox" className="size-[7px] appearance-none rounded-[1px] bg-[#4b5470] checked:bg-[#5690ff]" />
            导出完成后打开目录
          </label>
          <button type="submit" className={`${button} w-[22px] bg-[#5690ff]`}>导出</button>
          <button type="button" className={`${button} ml-[3px] w-[21px] bg-[#4b5470]`}>取消</button>
        </div>
      </form>
    </div>
  );
}

const FIELDS = [
  { label: '专辑', value: '' },
  { label: '作词', value: '阿罗' },
  { label: '作曲', value: '阿罗' },
  { label: '版权', value: '' },
  { label: '制谱者', value: '阿罗' },
  { label: '主解', value: '' },
  { label: '作品介绍', value: '' },
];

function Inspector() {
  const [concert, setConcert] = useState(false);
  const field = 'block h-[11px] w-full rounded-[3px] border border-[#363a4b] bg-[#0f1014] px-[2px] text-[6px] text-[#dcdde2]';
  return (
    <aside className="w-[126px] shrink-0 bg-[#2a2b33] text-[6px] text-[#dcdde2]">
      <div className="flex h-3 gap-px pl-px font-bold">
        <button className="flex-1 bg-[#5690ff] text-white">曲目</button>
        <button className="flex-1 bg-[#4b5470]">音轨</button>
      </div>
      <div className="px-1 pt-[2px] pr-[2px]">
        <input aria-label="标题" className={field} />
        {FIELDS.map(f => (
          <label key={f.label} className="block">
            <span className="block h-[14px] leading-[14px]">{f.label}：</span>
            <input defaultValue={f.value} className={field} />
          </label>
        ))}
        <div className="mt-[2px] flex h-3 items-center justify-between">
          <span className="whitespace-nowrap text-[#5c6375]">Ctrl+Return 可建立新的一…</span>
          <button className="flex h-[11px] w-10 items-center justify-center rounded-[3px] bg-[#4b5470] whitespace-nowrap text-white">
            显示较少
            <svg viewBox="0 0 6 6" className="ml-px size-[5px]"><path d="M3 1l3 4H0z" fill="currentColor" /></svg>
          </button>
        </div>
        <h3 className="mt-1 text-[9px] leading-[12px] font-bold text-[#eceded]">记谱法</h3>
        <label className="mt-px flex h-3 items-center gap-1">
          <span className="w-12">显示实际演奏调性</span>
          <input type="checkbox" className="sr-only" checked={concert} onChange={e => setConcert(e.target.checked)} />
          <span className={`flex h-2 w-4 items-center rounded-full px-[2px] ${concert ? 'justify-end bg-[#5690ff]' : 'bg-[#4b5470]'}`}>
            <span className="size-1 rounded-full bg-white" />
          </span>
          <span>{concert ? 'On' : 'Off'}</span>
        </label>
        <div className="mt-[2px] flex h-3 items-center gap-[3px] text-[#5c6375]">
          <span className="w-12 text-right">样式表单</span>
          <button className="h-[11px] w-[26px] rounded-[3px] bg-[#363a4b]">打开…</button>
        </div>
        <h3 className="mt-3 text-[9px] leading-[12px] font-bold text-[#eceded]">母带后期处理</h3>
        <p className="my-px h-[10px] leading-[10px]">设置总音轨输出的后期处理</p>
        <div className="flex flex-col gap-px">
          {['Analog', 'Studio', '10-Band'].map(name => (
            <div key={name} className="flex h-3 items-center divide-x divide-[#363a49] rounded-[2px] bg-[#4b5470]">
              <button aria-label={`${name} 效果`} className="flex h-3 w-3 items-center justify-center">
                <svg viewBox="0 0 10 6" className="h-[5px] w-[9px]">
                  <rect width="10" height="6" rx="1" fill="#e6e7ea" />
                  <path d="M2 1v2M5 1v2M8 1v2M1 4.6h8" stroke="#4b5470" />
                </svg>
              </button>
              <button className="flex h-3 flex-1 items-center justify-between pr-[5px] pl-1">
                {name}
                <ChevronsUpDown className="size-[7px]" strokeWidth={3} />
              </button>
              <button aria-label={`${name} 开关`} className="flex h-3 w-3 items-center justify-center text-[#3d5361]">
                <FaPowerOff className="size-[6px]" />
              </button>
              <button aria-label={`${name} 选项`} className="h-3 w-3 font-bold">⋮</button>
            </div>
          ))}
        </div>
        <button className="mt-1 ml-auto block h-3 w-[50px] rounded-[3px] bg-[#4b5470] text-white">显示单块矩阵…</button>
      </div>
    </aside>
  );
}

function Knob() {
  return (
    <svg viewBox="0 0 12 12" className="mx-auto size-[10px]">
      <path d="M3 10.4A5 5 0 1 1 9 10.4" fill="none" stroke="#a9b3cf" strokeWidth="1.2" />
      <path d="M6 1v4" stroke="#fff" strokeWidth="1.2" />
    </svg>
  );
}

function Volume({ label, value }: { label: string; value: number }) {
  return (
    <input
      type="range"
      aria-label={label}
      defaultValue={value}
      className="mx-auto h-2 w-16 appearance-none bg-transparent [&::-webkit-slider-runnable-track]:h-1 [&::-webkit-slider-runnable-track]:bg-[#0b0b0e] [&::-webkit-slider-thumb]:-mt-[2px] [&::-webkit-slider-thumb]:h-2 [&::-webkit-slider-thumb]:w-[2px] [&::-webkit-slider-thumb]:appearance-none [&::-webkit-slider-thumb]:bg-white"
    />
  );
}

function Mixer() {
  const row = 'grid grid-cols-[22px_98px_27px_68px_14px_17px_11px_19px_1fr] items-center';
  return (
    <footer className="h-[37px] shrink-0 bg-[#1e1f26] text-[6px] text-[#e6e7ea]">
      <div className={`${row} h-3`}>
        <button aria-label="添加音轨" className="ml-[5px]"><Plus className="size-[7px]" strokeWidth={4} /></button>
        <div className="flex items-center pl-1 font-bold">
          音轨<span className="ml-1">⋮</span>
          <span className="ml-auto flex items-center gap-[3px] pr-[6px] text-[#4a4d59]">
            <ChevronDown className="size-[7px]" />
            <ChevronUp className="size-[7px]" />
            <svg viewBox="0 0 7 7" className="size-[7px]"><path d="M1 0v7M2 3.5h5" stroke="currentColor" /></svg>
          </span>
        </div>
        <MuteSolo />
        <span className="col-span-2 text-center font-bold">音量</span>
        <span className="col-span-2 text-center">相位</span>
        <span className="pl-[2px]">均衡</span>
        <div className="flex">
          {['1', '', '', '4'].map((n, i) => (
            <span key={i} className="flex h-3 w-[13px] flex-col items-center gap-px">
              <span className={`h-[2px] w-[3px] ${i === 0 ? 'bg-[#5690ff]' : ''}`} />
              {n}
            </span>
          ))}
        </div>
      </div>
      <div className={`${row} h-3 bg-[#3d3f4c]`}>
        <div className="flex h-3 items-center gap-1">
          <div className="h-3 w-[2px] bg-[#e96b6b]" />
          <Headstock className="h-[9px] w-2 text-white" />
        </div>
        <div className="flex items-center justify-between pr-1 whitespace-nowrap">
          <span><span className="text-[#8c8e99]">1.</span> Steel Guitar</span>
          <button aria-label="显示音轨"><FaEye className="size-[9px]" /></button>
        </div>
        <MuteSolo />
        <Volume label="Steel Guitar 音量" value={72} />
        <span className="text-center text-[8px] leading-none font-bold text-[#101116]">A</span>
        <Knob />
        <span className="text-center text-[8px] leading-none font-bold text-[#101116]">A</span>
        <svg viewBox="0 0 8 8" className="ml-1 size-2 text-[#6b7b8b]">
          <path d="M1.5 0v8M4 0v8M6.5 0v8M.5 5h2M3 2.5h2M5.5 5.5h2" stroke="currentColor" strokeWidth=".8" />
        </svg>
        <div className="flex gap-px">
          {[0, 1, 2, 3].map(i => (
            <div key={i} className="flex h-3 w-3 items-center justify-center bg-[#ee7577]">
              {i === 0 && <div className="size-2 bg-[#101116]" />}
            </div>
          ))}
        </div>
      </div>
      <div className={`${row} h-[13px]`}>
        <span className="col-start-2 pl-1">主控台</span>
        <Knob />
        <Volume label="主控台 音量" value={67} />
        <span className="text-center text-[8px] leading-none font-bold text-[#101116]">A</span>
        <Knob />
        <span className="text-center text-[8px] leading-none font-bold text-[#101116]">A</span>
      </div>
    </footer>
  );
}

function MuteSolo() {
  return (
    <div className="flex items-center justify-around text-[#47606e]">
      <button aria-label="静音"><VolumeX className="size-[7px]" strokeWidth={3} /></button>
      <button aria-label="独奏"><FaHeadphones className="size-[7px]" /></button>
    </div>
  );
}

export default function App() {
  return (
    <div className="flex h-screen min-h-[452px] flex-col overflow-hidden bg-[#2a2b33] font-['Open_Sans','Noto_Sans_CJK_SC',sans-serif] leading-none select-none">
      <header className="shrink-0">
        <div className="flex h-4 items-center border-t border-[#c9c9cb] bg-white pl-1 text-[#8a8a8a]">
          <Logo />
          <h1 className="ml-[3px] flex-1 font-['Roboto','Open_Sans',sans-serif] text-[7px]">Empty - Guitar Pro 8</h1>
          <button aria-label="最小化" className="w-[23px]"><Minus className="mx-auto size-[7px]" /></button>
          <button aria-label="最大化" className="w-[23px]"><Square className="mx-auto size-[6px]" /></button>
          <button aria-label="关闭" className="w-[23px]"><X className="mx-auto size-2" /></button>
        </div>
        <nav className="flex h-[9px] items-center gap-2 pl-1 text-[6px] text-[#e6e7ea]">
          {MENUS.map(m => <button key={m}>{m}</button>)}
        </nav>
        <Toolbar />
        <div className="flex h-[14px] border-y border-[#1e1f26] bg-[#7f8db0] text-white">
          <button className="flex-1 font-['Roboto','Open_Sans',sans-serif] text-[7px] font-bold">Empty</button>
          <span className="mr-[3px] self-center rounded-full bg-white p-[2px]" />
          <button aria-label="新标签" className="flex w-3 items-center justify-center bg-[#4a5270]">
            <Plus className="size-[7px]" strokeWidth={4} />
          </button>
        </div>
      </header>

      <div className="flex min-h-0 flex-1">
        <Palette />
        <main className="min-w-0 flex-1 bg-[#454855] px-4">
          <div className="h-full bg-[#f4f4f4]">
            <div className="relative mx-auto w-[404px] font-['Liberation_Serif','Noto_Sans_CJK_SC',serif] text-[#15161a]">
              <h2 className="pt-[29px] text-center text-[17px] leading-[17px] font-light">现在的我</h2>
              <p className="text-center text-[9px] leading-[9px] font-bold">原唱：阿罗</p>
              <p className="h-[10px] pr-[18px] text-right text-[7px] leading-[7px]">Words &amp; Music by 阿罗</p>
              <Score />
              <div className="absolute top-[67px] left-[109px] h-[198px] w-[187px] border-2 border-[#fb3a30]" />
              <div className="font-['Open_Sans','Noto_Sans_CJK_SC',sans-serif]">
                <ExportDialog />
              </div>
            </div>
          </div>
        </main>
        <Inspector />
      </div>
      <Mixer />
    </div>
  );
}
